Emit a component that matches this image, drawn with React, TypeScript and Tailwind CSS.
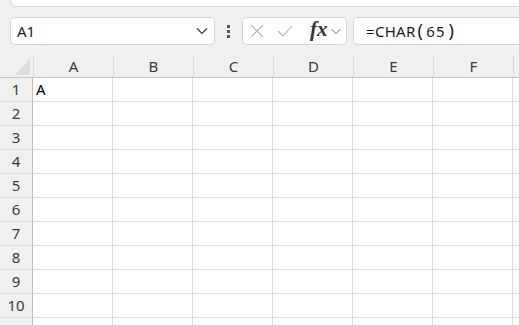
import React from 'react';

const COLS = ['A', 'B', 'C', 'D', 'E', 'F', 'G'];
const ROWS = [1, 2, 3, 4, 5, 6, 7, 8, 9, 10, 11];

const Chevron: React.FC<{ className?: string }> = ({ className }) => (
    <svg viewBox="0 0 12 8" className={className} fill="none" stroke="currentColor" strokeWidth="1.2">
        <path d="M1 1.5 L6 6.5 L11 1.5" />
    </svg>
);

const App: React.FC = () => {
    return (
        <div className="w-[519px] h-[325px] overflow-hidden bg-[#f0f0f0] flex flex-col" style={{ fontFamily: '"Noto Sans", "Open Sans", sans-serif' }}>
            {/* top strip */}
            <div className="h-[7px] ml-[10px] -mr-[20px] bg-white rounded-b-[7px] border-b border-x border-[#dcdcdc] shrink-0" />

            {/* formula bar */}
            <div className="flex items-center mt-[10px] h-[28px] pl-[10px] shrink-0">
                <div className="w-[205px] h-[28px] bg-white border border-[#d6d6d6] rounded-[5px] flex items-center pl-[6px] pr-[6px] text-[15px] text-[#1a1a1a]">
                    <span className="flex-1 leading-none">A1</span>
                    <Chevron className="w-[12px] h-[8px] text-[#3a3a3a]" />
                </div>
                <div className="w-[27px] flex flex-col items-center gap-[2px]">
                    <div className="w-[3px] h-[3px] bg-[#555]" />
                    <div className="w-[3px] h-[3px] bg-[#555]" />
                    <div className="w-[3px] h-[3px] bg-[#555]" />
                </div>
                <div className="w-[105px] h-[28px] bg-white border border-[#d6d6d6] rounded-[5px] flex items-center pl-[7px]">
                    <svg viewBox="0 0 14 14" className="w-[14px] h-[14px] text-[#b4b4b4]" fill="none" stroke="currentColor" strokeWidth="1.1">
                        <path d="M1 1 L13 13 M13 1 L1 13" />
                    </svg>
                    <svg viewBox="0 0 16 12" className="w-[16px] h-[12px] ml-[13px] text-[#b4b4b4]" fill="none" stroke="currentColor" strokeWidth="1.1">
                        <path d="M1 6 L6 11 L15 1" />
                    </svg>
                    <span className="ml-[17px] text-[21px] italic font-bold text-[#333] leading-none -mt-[3px]" style={{ fontFamily: '"Liberation Serif", serif' }}>fx</span>
                    <Chevron className="ml-[3px] w-[10px] h-[7px] text-[#666]" />
                </div>
                <div className="ml-[6px] flex-1 -mr-[20px] h-[28px] bg-white border border-[#d6d6d6] rounded-[5px] flex items-center pl-[12px] text-[15px] text-[#1a1a1a] tracking-[0.3px]">
                    <span>=CHAR</span>
                    <span className="ml-[2px] mr-[3px] text-[18px] leading-none -mt-[2px]">(</span>
                    <span className="tracking-[1px]">65</span>
                    <span className="ml-[3px] text-[18px] leading-none -mt-[2px]">)</span>
                </div>
            </div>

            {/* sheet */}
            <div className="mt-[10px] flex-1 flex flex-col">
                {/* column headers */}
                <div className="flex h-[23px] border-b border-[#c4c4c4] shrink-0">
                    <div className="w-[33px] shrink-0 relative">
                        <div className="absolute right-[3px] bottom-[2px] w-0 h-0 border-l-[15px] border-l-transparent border-b-[16px] border-b-[#dcdcdc]" />
                    </div>
                    {COLS.map(c => (
                        <div key={c} className="w-[80px] shrink-0 border-l border-[#dadada] flex items-center justify-center text-[15px] text-[#3b3b3b]">
                            {c === 'G' ? '' : c}
                        </div>
                    ))}
                </div>
                {/* rows */}
                {ROWS.map(r => (
                    <div key={r} className="flex h-[24px] shrink-0">
                        <div className="w-[33px] shrink-0 border-r border-[#bdbdbd] border-b border-b-[#dadada] flex items-center justify-center text-[15px] text-[#3b3b3b]">
                            {r}
                        </div>
                        {COLS.map(c => (
                            <div key={c} className="w-[80px] shrink-0 bg-white border-r border-b border-[#dcdcdc] flex items-center pl-[3px] text-[15px] text-black">
                                {r === 1 && c === 'A' ? 'A' : ''}
                            </div>
                        ))}
                    </div>
                ))}
            </div>
        </div>
    );
};

export default App;
